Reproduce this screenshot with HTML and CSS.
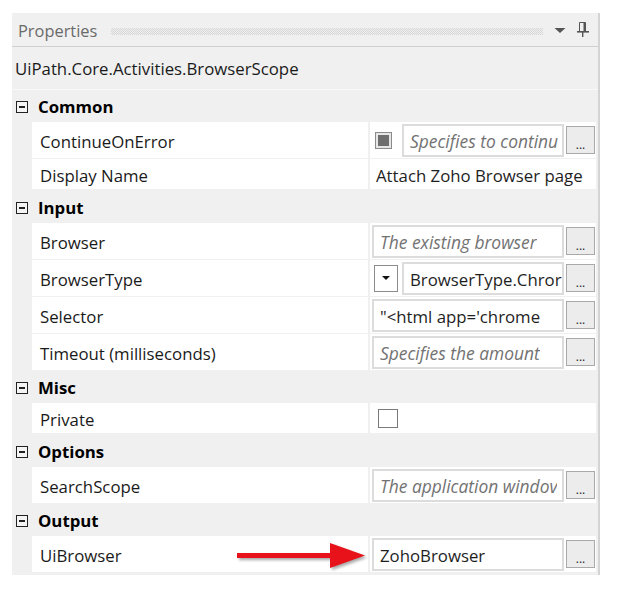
FILE: index.html
```html
<!DOCTYPE html>
<html>
<head>
<meta charset="utf-8">
<link rel="stylesheet" href="styles.css">
</head>
<body>
<div class="page">
  <div class="panel">
    <div class="panel-header">
      <span class="panel-title">Properties</span>
      <span class="grip"></span>
      <svg class="hdr-icon" width="12" height="8" viewBox="0 0 12 8"><path d="M0.5 2 L11.5 2 L6 7 Z" fill="#555"/></svg>
      <svg class="hdr-icon pin" width="12" height="16" viewBox="0 0 12 16"><path d="M2.5 1.5 H8.5 V10.5 H2.5 Z" fill="none" stroke="#555" stroke-width="1"/><rect x="6.5" y="1.5" width="2" height="9" fill="#555"/><rect x="0" y="10" width="12" height="1.6" fill="#555"/><rect x="5" y="11" width="1.4" height="5" fill="#555"/></svg>
    </div>
    <div class="type-row">UiPath.Core.Activities.BrowserScope</div>
    <div class="grid">
      <div class="cat"><span class="toggle"></span>Common</div>
      <div class="prop tall">
        <div class="name">ContinueOnError</div>
        <div class="value">
          <span class="check filled"><span></span></span>
          <span class="tb after-check ph"><span class="txt">Specifies to continu</span></span>
          <span class="btn">...</span>
        </div>
      </div>
      <div class="prop plain">
        <div class="name">Display Name</div>
        <div class="value"><span class="plain-val">Attach Zoho Browser page</span></div>
      </div>

      <div class="cat"><span class="toggle"></span>Input</div>
      <div class="prop tall">
        <div class="name">Browser</div>
        <div class="value"><span class="tb ph"><span class="txt">The existing browser</span></span><span class="btn">...</span></div>
      </div>
      <div class="prop tall">
        <div class="name">BrowserType</div>
        <div class="value">
          <span class="combo"><svg width="10" height="6" viewBox="0 0 10 6"><path d="M1 1 H9 L5 5 Z" fill="#111"/></svg></span>
          <span class="tb after-combo"><span class="txt">BrowserType.Chror</span></span>
          <span class="btn">...</span>
        </div>
      </div>
      <div class="prop tall">
        <div class="name">Selector</div>
        <div class="value"><span class="tb"><span class="txt">"&lt;html app='chrome</span></span><span class="btn">...</span></div>
      </div>
      <div class="prop tall">
        <div class="name">Timeout (milliseconds)</div>
        <div class="value"><span class="tb ph"><span class="txt">Specifies the amount</span></span><span class="btn">...</span></div>
      </div>

      <div class="cat"><span class="toggle"></span>Misc</div>
      <div class="prop plain">
        <div class="name">Private</div>
        <div class="value"><span class="check empty"></span></div>
      </div>

      <div class="cat"><span class="toggle"></span>Options</div>
      <div class="prop tall">
        <div class="name">SearchScope</div>
        <div class="value"><span class="tb ph"><span class="txt">The application windov</span></span><span class="btn">...</span></div>
      </div>

      <div class="cat"><span class="toggle"></span>Output</div>
      <div class="prop tall">
        <div class="name">UiBrowser</div>
        <div class="value"><span class="tb"><span class="txt">ZohoBrowser</span></span><span class="btn">...</span></div>
      </div>
    </div>
  </div>
  <svg class="arrow" width="140" height="40" viewBox="0 0 140 40">
    <rect x="7" y="15" width="96" height="5" fill="#e8121a"/>
    <path d="M100 5 L135 17.5 L100 30 Z" fill="#e8121a"/>
  </svg>
</div>
</body>
</html>
```
FILE: styles.css
```css
* { box-sizing: border-box; }

body {
  margin: 0;
  background: #ffffff;
  font-family: "Open Sans", "Noto Sans", sans-serif;
  font-size: 16.8px;
  color: #1a1a1a;
}

.page {
  position: relative;
  padding: 13px 0 0 12px;
}

.panel {
  width: 588px;
  height: 562px;
  background: #f0f0f0;
  border-right: 2px solid #d4d4d4;
}

.panel-header {
  height: 34px;
  border-bottom: 1px solid #cfcfcf;
  display: flex;
  align-items: center;
  padding: 1px 9px 0 6px;
}

.panel-title {
  font-size: 16.4px;
  color: #6a6a6a;
}

.grip {
  flex: 1;
  height: 7px;
  margin: 2px 11px 0 14px;
  background-image: repeating-conic-gradient(#d6d6d6 0 25%, transparent 0 50%);
  background-size: 2px 2px;
}

.hdr-icon { display: block; }
.hdr-icon.pin { margin-left: 11px; margin-top: -2px; }

.type-row {
  height: 43px;
  padding-left: 3px;
  display: flex;
  align-items: center;
  color: #1a1a1a;
  border-bottom: 1px solid #f8f8f8;
}

.grid {
  display: flex;
  flex-direction: column;
  padding-right: 2px;
}

.cat {
  height: 32px;
  display: flex;
  align-items: center;
  font-weight: 700;
  color: #000;
  padding-top: 1px;
}

.toggle {
  position: relative;
  width: 12px;
  height: 12px;
  margin: 0 10px 0 4px;
  border: 1px solid #222;
  background: #f4f4f4;
}

.toggle::after {
  content: "";
  position: absolute;
  left: 2px;
  top: 4px;
  width: 6px;
  height: 2px;
  background: #222;
}

.prop {
  display: flex;
  margin-left: 20px;
}

.prop.tall { height: 37px; padding-bottom: 1px; }
.prop.plain { height: 32px; padding-bottom: 2px; }

.name {
  width: 336px;
  background: #ffffff;
  padding: 2px 0 0 8px;
  display: flex;
  align-items: center;
  white-space: nowrap;
}

.value {
  width: 226px;
  margin-left: 2px;
  background: #ffffff;
  display: flex;
  align-items: center;
  padding-left: 2px;
}

.tb {
  flex: none;
  width: 192px;
  height: 33px;
  border: 2px solid #dcdcdc;
  padding: 2px 0 0 6px;
  display: flex;
  align-items: center;
  overflow: hidden;
  white-space: nowrap;
  color: #1e1e1e;
  background: #fff;
}

.tb .txt {
  display: block;
  max-width: 100%;
  overflow: hidden;
}

.tb.after-check { width: 162px; margin-left: 10px; }
.tb.after-combo { width: 162px; margin-left: 4px; }

.tb.ph {
  font-style: italic;
  font-size: 17.4px;
  color: #727272;
}

.btn {
  flex: none;
  width: 29px;
  height: 28px;
  margin-left: 2px;
  border: 1px solid #a9a9a9;
  background: #ececec;
  display: flex;
  justify-content: center;
  align-items: flex-end;
  padding-bottom: 2px;
  font-size: 12px;
  line-height: 12px;
  color: #222;
}

.check {
  flex: none;
  width: 17px;
  height: 17px;
  border: 1px solid #8a8a8a;
  background: #fff;
  margin-left: 3px;
  display: flex;
  align-items: center;
  justify-content: center;
}

.check.filled { background: #e6e6e6; }
.check.filled span {
  width: 11px;
  height: 11px;
  background: #6e6e6e;
}

.check.empty {
  width: 20px;
  height: 19px;
  margin-left: 6px;
  border-color: #7a7a7a;
}

.combo {
  flex: none;
  width: 24px;
  height: 27px;
  border: 1px solid #8c8c8c;
  background: #fff;
  margin-left: 2px;
  display: flex;
  align-items: center;
  justify-content: center;
}

.plain-val {
  padding: 2px 0 0 4px;
  white-space: nowrap;
  overflow: hidden;
  color: #1e1e1e;
}

.arrow {
  position: absolute;
  left: 230px;
  top: 538px;
  filter: drop-shadow(2px 2px 1.5px rgba(0, 0, 0, 0.35));
}
```
